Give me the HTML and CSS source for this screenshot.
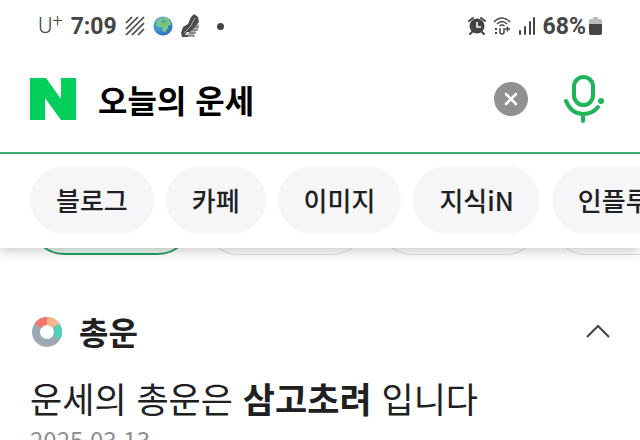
FILE: index.html
```html
<!DOCTYPE html>
<html lang="ko">
<head>
    <meta charset="UTF-8">
    <meta name="viewport" content="width=device-width, initial-scale=1">
    <title>오늘의 운세</title>
    <link rel="stylesheet" href="styles.css">
</head>
<body>
    <header class="header">
        <div class="status">
            <div class="status-left">
                <span class="carrier">U<sup>+</sup></span>
                <span class="clock">7:09</span>
                <svg class="stripes" width="20" height="20" viewBox="0 0 20 20">
                    <path d="M1 7 7 1M1 13 13 1M1 19 19 1M7 19 19 7M13 19l6-6" fill="none" stroke="#444" stroke-width="1.700"/>
                </svg>
                <svg class="globe" width="20" height="20" viewBox="0 0 20 20">
                    <defs>
                        <radialGradient id="sea" cx=".35" cy=".3" r=".8">
                            <stop offset="0" stop-color="#69b7ee"/>
                            <stop offset="1" stop-color="#2468ba"/>
                        </radialGradient>
                    </defs>
                    <circle cx="10" cy="10" r="9.500" fill="url(#sea)"/>
                    <path d="M4 5Q6 2 9 2l3-1 4 2 2 4-1 3-2-1 0 3-3 4-2 0-1-5-4 0-2-3z" fill="#78c77a"/>
                    <path d="M8 5l4-1 1 2-3 1z" fill="#4a91c8"/>
                </svg>
                <svg class="shoe" width="20" height="24" viewBox="0 0 20 24">
                    <path d="M9 10h9v3h-1v3h-2v3h-2v3H5l4-6z" fill="#bbb"/>
                    <path d="M10 3 13 0l4 3 1 5-5 6-4 4-3 0-2 3 3 0 0 2-6 0-1-4 2-6 5-3z" fill="#4a4a4a"/>
                    <path d="M11 13h7M10 16h7M8 19h7M7 22h7" stroke="#555" stroke-width="1"/>
                    <path d="M14 4 9 13l-6 6" fill="none" stroke="#aaa"/>
                </svg>
                <span class="dot"></span>
            </div>
            <div class="status-right">
                <svg width="18" height="20" viewBox="0 0 18 20">
                    <circle cx="9" cy="10" r="7.500" fill="#444"/>
                    <path d="M1 5 5 2M17 5l-4-3M4 16l-2 2M14 16l2 2" stroke="#444" stroke-width="2" stroke-linecap="round"/>
                    <path d="M9 6v5h4" fill="none" stroke="#fff" stroke-width="1.600"/>
                </svg>
                <svg width="18" height="20" viewBox="0 0 18 20">
                    <path d="M1 6Q9-2 17 6M4 8Q9 3 14 8M6.500 10Q9 8 11.500 10" fill="none" stroke="#444" stroke-width="1.500"/>
                    <path d="M7 12v4q0 2 2 2t2-2v-4M12 13h5M14.500 10.500v5" fill="none" stroke="#444" stroke-width="1.500"/>
                    <path d="M2 12h2v2H2zM2 16h2v2H2z" fill="#444"/>
                </svg>
                <svg width="18" height="20" viewBox="0 0 18 20">
                    <path d="M2 15v3M7 11v7M12 6v12M16 2v16" stroke="#444" stroke-width="2" stroke-linecap="round"/>
                </svg>
                <span class="percent">68%</span>
                <svg class="battery" width="13" height="18" viewBox="0 0 13 18">
                    <path d="M4 0h5v2h2q2 0 2 2v4H0V4q0-2 2-2h2z" fill="#bbb"/>
                    <path d="M0 7h13v9q0 2-2 2H2q-2 0-2-2z" fill="#444"/>
                </svg>
            </div>
        </div>
        <form class="search">
            <a class="logo" href="#" aria-label="네이버">
                <svg width="46" height="42" viewBox="0 0 46 42">
                    <path d="M0 0h16l15 21V0h15v42H31L15 20v22H0z" fill="#03cf5d"/>
                </svg>
            </a>
            <input class="query" type="text" value="오늘의 운세" aria-label="검색어">
            <button class="clear" type="reset" aria-label="지우기">
                <svg width="34" height="34" viewBox="0 0 34 34">
                    <circle cx="17" cy="17" r="17" fill="#919194"/>
                    <path d="M12 12l10 10M22 12 12 22" stroke="#fff" stroke-width="2.500" stroke-linecap="round"/>
                </svg>
            </button>
            <button class="mic" type="button" aria-label="음성 검색">
                <svg width="40" height="48" viewBox="0 0 40 48">
                    <g fill="none" stroke="#1eb45a" stroke-width="4" stroke-linecap="round">
                        <rect x="10" y="2" width="19" height="28" rx="9.500"/>
                        <path d="M2 26C6 36 13 39 19 39S30 37 34 32M19 39v7"/>
                    </g>
                    <circle cx="37" cy="26" r="3" fill="#1eb45a"/>
                </svg>
            </button>
        </form>
        <nav class="tabs">
            <a href="#">블로그</a>
            <a href="#">카페</a>
            <a href="#">이미지</a>
            <a href="#">지식iN</a>
            <a href="#">인플루언서</a>
        </nav>
    </header>
    <main>
        <div class="filters">
            <span class="filter selected"></span>
            <span class="filter"></span>
            <span class="filter"></span>
            <span class="filter"></span>
        </div>
        <section class="fortune">
            <div class="fortune-title">
                <svg width="32" height="32" viewBox="0 0 32 32">
                    <g fill="none" stroke-width="8">
                        <circle cx="17" cy="17" r="11" stroke="#9ea9b6"/>
                        <path d="M8 10.700A11 11 0 0 1 17 6" stroke="#f7776d"/>
                        <path d="M17 6a11 11 0 0 1 9 4.700" stroke="#f8b48a"/>
                        <path d="M26 10.700A11 11 0 0 1 26.500 22.500" stroke="#54d0b4"/>
                    </g>
                </svg>
                <h2>총운</h2>
                <button class="fold" type="button" aria-label="접기">
                    <svg width="24" height="14" viewBox="0 0 24 14">
                        <path d="M1 13 12 2l11 11" fill="none" stroke="#444" stroke-width="2"/>
                    </svg>
                </button>
            </div>
            <p class="summary">운세의 총운은 <strong>삼고초려</strong> 입니다</p>
            <p class="date">2025.03.13.</p>
        </section>
    </main>
</body>
</html>
```
FILE: styles.css
```css
*{
    padding: 0;
    margin: 0;
    box-sizing: border-box;
}
body{
    height: 100vh;
    overflow: hidden;
    background: #fff;
    color: #202022;
    font-family: "Noto Sans CJK KR", sans-serif;
}
a{
    color: inherit;
    text-decoration: none;
}
button{
    border: 0;
    background: none;
    cursor: pointer;
}
svg{
    display: block;
    flex-shrink: 0;
}
.header{
    position: relative;
    z-index: 1;
    background: #fff;
    box-shadow: 0 2px 12px rgba(0,0,0,.24);
}
.status{
    display: flex;
    justify-content: space-between;
    height: 52px;
    padding: 0 38px;
    color: #444;
    font-family: Roboto, sans-serif;
}
.status-left, .status-right{
    display: flex;
    align-items: center;
}
.status-left{
    gap: 8px;
}
.status-right{
    gap: 7px;
}
.carrier{
    font-size: 22px;
    font-weight: 300;
    line-height: 24px;
}
.carrier sup{
    font-size: 18px;
    line-height: 0;
    vertical-align: 6px;
}
.clock, .percent{
    font-size: 23px;
    font-weight: 700;
}
.dot{
    width: 7px;
    height: 7px;
    margin-left: 8px;
    border-radius: 50%;
    background: #444;
}
.battery{
    margin-left: -4px;
}
.search{
    display: flex;
    align-items: center;
    height: 102px;
    padding: 0 36px 6px 30px;
    border-bottom: 2px solid #36ad72;
}
.query{
    flex: 1;
    min-width: 0;
    height: 60px;
    margin-left: 22px;
    border: 0;
    outline: 0;
    background: none;
    color: #000;
    font-family: inherit;
    font-size: 32px;
    font-weight: 700;
}
.mic{
    margin-left: 36px;
}
.tabs{
    display: flex;
    gap: 12px;
    padding: 12px 0 14px 30px;
    overflow: hidden;
}
.tabs a{
    flex-shrink: 0;
    padding: 0 26px;
    border-radius: 34px;
    background: #f6f6f9;
    font-size: 26px;
    font-weight: 500;
    line-height: 68px;
}
/* the filter row is scrolled up under the header */
.filters{
    display: flex;
    gap: 12px;
    margin-top: -61px;
    padding-left: 30px;
    overflow: hidden;
}
.filter{
    flex: 0 0 162px;
    height: 68px;
    border: 1px solid #ddd;
    border-radius: 34px;
}
.filters .selected{
    border: 2px solid #249a60;
    background: #e8f7ef;
}
.fortune{
    padding: 52px 30px 0;
}
.fortune-title{
    display: flex;
    align-items: center;
    height: 48px;
}
.fortune-title h2{
    margin-left: 17px;
    font-size: 32px;
    font-weight: 700;
    line-height: 46px;
}
.fold{
    margin-left: auto;
}
.summary{
    margin-top: 18px;
    font-size: 35px;
    line-height: 50px;
}
.date{
    color: #8f8f8f;
    font-size: 24px;
    line-height: 34px;
}
```
